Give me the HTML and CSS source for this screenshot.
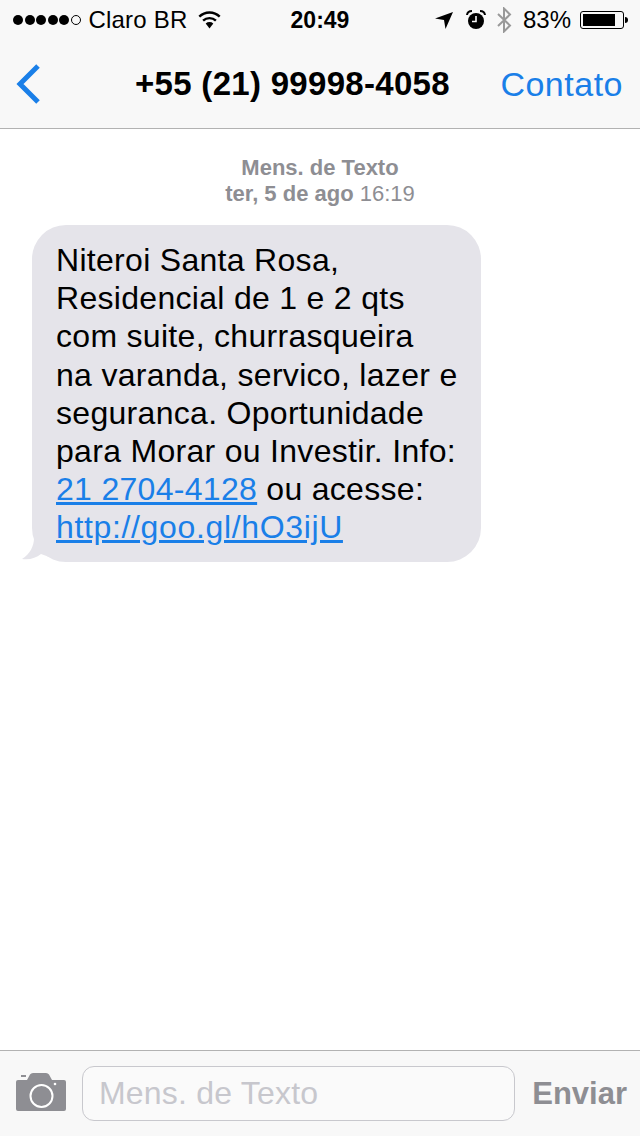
FILE: index.html
```html
<!DOCTYPE html>
<html lang="pt-BR">
<head>
    <meta charset="UTF-8">
    <meta name="viewport" content="width=device-width, initial-scale=1.0">
    <title>Mensagens</title>
    <link rel="stylesheet" href="styles.css">
</head>
<body>
    <div class="phone">
        <div class="top-bar">
            <div class="status">
                <div class="status-left">
                    <span class="signal">
                        <i class="dot"></i><i class="dot"></i><i class="dot"></i><i class="dot"></i><i class="dot"></i><i class="dot empty"></i>
                    </span>
                    <span class="carrier">Claro BR</span>
                    <svg class="wifi" width="25" height="18" viewBox="0 0 24 18">
                        <path d="M12 17.500 L8.200 12.600 A5.600 5.600 0 0 1 15.800 12.600 Z" fill="#000"/>
                        <path d="M5.600 9.700 A9.200 9.200 0 0 1 18.400 9.700" fill="none" stroke="#000" stroke-width="2.400"/>
                        <path d="M1.800 5.700 A14.500 14.500 0 0 1 22.200 5.700" fill="none" stroke="#000" stroke-width="2.400"/>
                    </svg>
                </div>
                <div class="status-time">20:49</div>
                <div class="status-right">
                    <svg class="arrow" width="18" height="18" viewBox="0 0 18 18">
                        <path d="M18 1 L10.500 18 L9 9 L0 7.500 Z" fill="#000"/>
                    </svg>
                    <svg class="alarm" width="20" height="20" viewBox="0 0 20 20">
                        <circle cx="10" cy="11" r="8" fill="#000"/>
                        <path d="M10 6 V11.500 H6" fill="none" stroke="#f8f8f8" stroke-width="1.600"/>
                        <path d="M1 5 Q1.500 1 6 1" fill="none" stroke="#000" stroke-width="2"/>
                        <path d="M19 5 Q18.500 1 14 1" fill="none" stroke="#000" stroke-width="2"/>
                    </svg>
                    <svg class="bluetooth" width="16" height="26" viewBox="0 0 16 26">
                        <path d="M2 7 L14 18.500 L8 24.500 V1.500 L14 7.500 L2 19" fill="none" stroke="#999" stroke-width="2"/>
                    </svg>
                    <span class="percent">83%</span>
                    <span class="battery"><span class="battery-fill"></span></span>
                    <span class="battery-tip"></span>
                </div>
            </div>
            <div class="nav">
                <svg class="back" width="26" height="42" viewBox="0 0 26 42">
                    <path d="M23 3 L5 21 L23 39" fill="none" stroke="#1a7fe8" stroke-width="5"/>
                </svg>
                <div class="nav-title">+55 (21) 99998-4058</div>
                <div class="nav-action">Contato</div>
            </div>
        </div>

        <div class="thread">
            <div class="thread-head">
                <div class="thread-kind">Mens. de Texto</div>
                <div class="thread-date"><b>ter, 5 de ago</b> 16:19</div>
            </div>
            <div class="bubble">
                Niteroi Santa Rosa,<br>
                Residencial de 1 e 2 qts<br>
                com suite, churrasqueira<br>
                na varanda, servico, lazer e<br>
                seguranca. Oportunidade<br>
                para Morar ou Investir. Info:<br>
                <a href="#">21 2704-4128</a> ou acesse:<br>
                <a class="url" href="#">http://goo.gl/hO3ijU</a>
                <svg class="bubble-tail" width="30" height="24" viewBox="0 0 30 24">
                    <path d="M12 0 C12 8 8 16 0 21 C8 22 14 20 19 16 L30 20 V0 Z" fill="#e5e4ea"/>
                </svg>
            </div>
        </div>

        <div class="composer">
            <svg class="camera" width="50" height="38" viewBox="0 0 50 38">
                <path d="M2 7 H11 L14 1.500 Q15 0 17 0 H30 Q32 0 33 1.500 L36 7 H48 Q50 7 50 9 V36 Q50 38 48 38 H2 Q0 38 0 36 V9 Q0 7 2 7 Z" fill="#8e8e93"/>
                <rect x="5" y="2" width="5" height="2" fill="#8e8e93"/>
                <circle cx="25.500" cy="23" r="11" fill="none" stroke="#fff" stroke-width="2"/>
                <circle cx="39" cy="11" r="1.300" fill="#fff"/>
            </svg>
            <div class="composer-input">Mens. de Texto</div>
            <div class="composer-send">Enviar</div>
        </div>
    </div>
</body>
</html>
```

FILE: styles.css
```css
body {
    margin: 0;
    padding: 0;
    background-color: #fff;
    font-family: "Liberation Sans", Arial, sans-serif;
}
.phone {
    width: 640px;
    height: 1136px;
    display: flex;
    flex-direction: column;
    overflow: hidden;
}
.top-bar {
    height: 128px;
    background-color: #f8f8f8;
    border-bottom: 1px solid #b2b2b2;
    flex-shrink: 0;
}
.status {
    height: 40px;
    display: grid;
    grid-template-columns: 1fr auto 1fr;
    align-items: center;
    font-size: 24px;
    color: #000;
}
.status-left {
    display: flex;
    align-items: center;
    padding-left: 13px;
}
.signal {
    display: flex;
    gap: 1.500px;
}
.dot {
    width: 10px;
    height: 10px;
    border-radius: 50%;
    background-color: #000;
    box-sizing: border-box;
}
.dot.empty {
    background: none;
    border: 1px solid #000;
}
.carrier {
    margin-left: 8px;
    letter-spacing: 0.200px;
}
.wifi {
    margin-left: 10px;
}
.status-time {
    font-weight: bold;
    font-size: 23px;
}
.status-right {
    display: flex;
    align-items: center;
    justify-content: flex-end;
    padding-right: 12px;
}
.alarm {
    margin-left: 13px;
}
.bluetooth {
    margin-left: 10px;
}
.percent {
    margin-left: 11px;
}
.battery {
    width: 44px;
    height: 18px;
    margin-left: 9px;
    padding: 2px;
    box-sizing: border-box;
    border: 1px solid #000;
    border-radius: 3px;
    display: block;
}
.battery-fill {
    display: block;
    width: 83%;
    height: 100%;
    background-color: #000;
}
.battery-tip {
    width: 3px;
    height: 6px;
    margin-left: 1px;
    background-color: #000;
    border-radius: 0 3px 3px 0;
}
.nav {
    height: 88px;
    display: flex;
    align-items: center;
    padding: 0 17px 0 15px;
}
.back {
    flex-shrink: 0;
    margin-bottom: 1px;
}
.nav-title {
    margin-left: 94px;
    font-size: 33px;
    font-weight: bold;
    letter-spacing: 0.300px;
    color: #000;
    white-space: nowrap;
}
.nav-action {
    margin-left: auto;
    font-size: 34px;
    letter-spacing: 0.500px;
    color: #1a7fe8;
}
.thread {
    flex: 1;
    background-color: #fff;
}
.thread-head {
    padding-top: 26px;
    text-align: center;
    font-size: 22px;
    line-height: 26px;
    color: #8e8e93;
}
.thread-kind {
    font-weight: bold;
}
.thread-date b {
    font-weight: bold;
}
.bubble {
    position: relative;
    width: 449px;
    height: 337px;
    margin: 18px 0 0 32px;
    padding: 16px 0 0 24px;
    box-sizing: border-box;
    background-color: #e5e4ea;
    border-radius: 34px;
    font-size: 32px;
    letter-spacing: 0.300px;
    line-height: 38.200px;
    color: #000;
    white-space: nowrap;
}
.bubble a {
    color: #1a7fe8;
    text-decoration: underline;
}
.bubble a.url {
    letter-spacing: 0.650px;
}
.bubble-tail {
    position: absolute;
    left: -10px;
    bottom: 0;
}
.composer {
    height: 85px;
    flex-shrink: 0;
    background-color: #f8f8f8;
    border-top: 1px solid #b2b2b2;
    display: flex;
    align-items: center;
    padding: 0 13px 0 16px;
}
.camera {
    flex-shrink: 0;
    margin-bottom: 3px;
}
.composer-input {
    width: 433px;
    height: 55px;
    margin-left: 16px;
    padding-left: 16px;
    box-sizing: border-box;
    background-color: #fafafa;
    border: 1px solid #c8c8cd;
    border-radius: 12px;
    font-size: 32px;
    letter-spacing: 0.200px;
    line-height: 53px;
    color: #c7c7cd;
}
.composer-send {
    margin-left: auto;
    font-size: 31px;
    font-weight: bold;
    color: #8e8e93;
}
```
